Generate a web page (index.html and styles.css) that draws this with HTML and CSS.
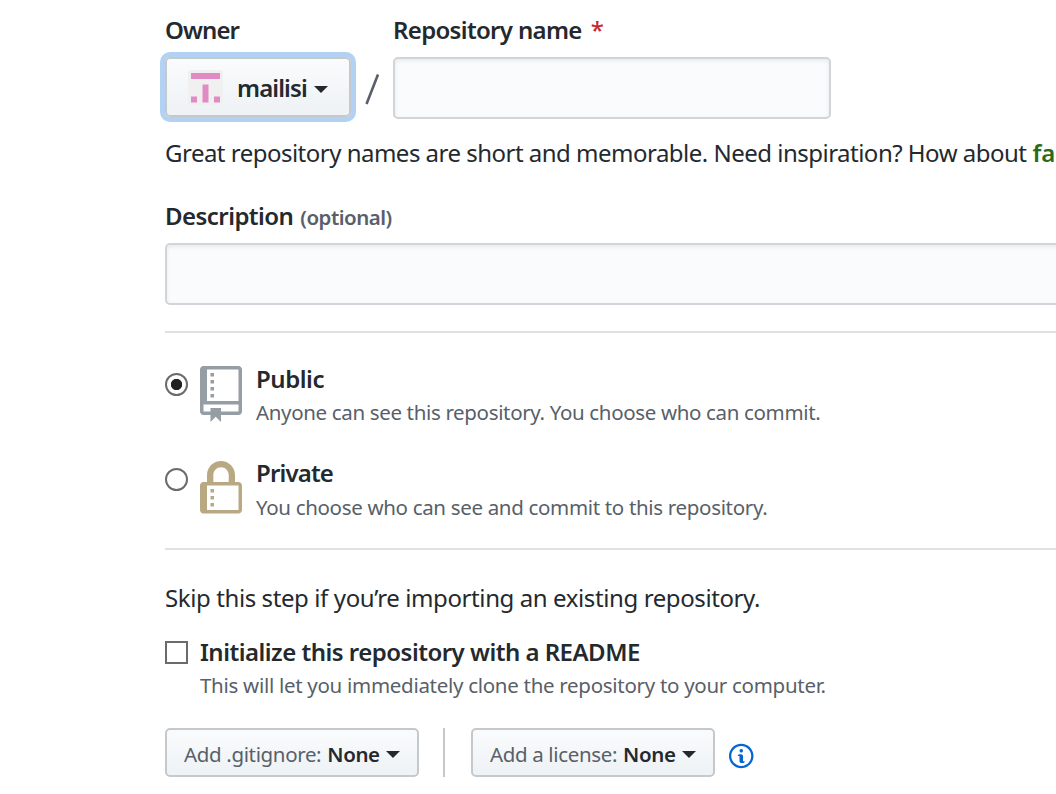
FILE: index.html
```html
<!DOCTYPE html>
<html lang="en">
<head>
<meta charset="utf-8">
<title>Create a new repository</title>
<link rel="stylesheet" href="styles.css">
</head>
<body>
<main class="page">
  <form class="form">
    <div class="name-row">
      <div class="field">
        <label class="label"><span class="t owner">Owner</span></label>
        <button type="button" class="btn owner-btn">
          <svg class="avatar" viewBox="0 0 35 35"><rect width="35" height="35" rx="3" fill="#f0f0f0"/><path fill="#e08bc3" d="M3 3h29v6H3zM14.500 14.500h6v18h-6zM3 26.500h6v6H3zM26 26.500h6v6h-6z"/></svg>
          <span class="t mailisi">mailisi</span><i class="caret"></i>
        </button>
      </div>
      <svg class="slash" viewBox="0 0 18 32"><path d="M2.500 31 14 1.500" stroke="#586069" stroke-width="2.600"/></svg>
      <div class="field">
        <label class="label"><span class="t reponame">Repository name</span><span class="star">*</span></label>
        <input class="input name-input" type="text">
      </div>
    </div>
    <p class="note"><span class="t great">Great repository names are short and memorable. Need inspiration? How about</span><strong class="suggestion">fa</strong></p>
    <label class="label desc-label"><span class="t description">Description</span><span class="t optional">(optional)</span></label>
    <input class="input desc-input" type="text">
    <hr class="rule">
    <div class="choice public">
      <span class="radio checked"></span>
      <svg class="icon" width="42" height="56" viewBox="0 0 12 16" fill="#959da5"><path fill-rule="evenodd" d="M4 9H3V8h1v1zm0-3H3v1h1V6zm0-2H3v1h1V4zm0-2H3v1h1V2zm8-1v12c0 .55-.45 1-1 1H6v2l-1.500-1.500L3 16v-2H1c-.55 0-1-.45-1-1V1c0-.55.45-1 1-1h10c.55 0 1 .45 1 1zm-1 10H1v2h2v-1h3v1h5v-2zm0-10H2v9h9V1z"/></svg>
      <div class="choice-text">
        <div class="title"><span class="t pub">Public</span></div>
        <div class="sub"><span class="t pubsub">Anyone can see this repository. You choose who can commit.</span></div>
      </div>
    </div>
    <div class="choice private">
      <span class="radio"></span>
      <svg class="icon" width="42" height="56" viewBox="0 0 12 16" fill="#b9a983"><path fill-rule="evenodd" d="M4 13H3v-1h1v1zm8-6v7c0 .55-.45 1-1 1H1c-.55 0-1-.45-1-1V7c0-.55.45-1 1-1h1V4c0-2.200 1.800-4 4-4s4 1.800 4 4v2h1c.55 0 1 .45 1 1zM3.800 6h4.410V4c0-1.220-.98-2.200-2.200-2.200-1.220 0-2.200.98-2.200 2.200v2H3.800zM11 7H2v7h9V7zM4 8H3v1h1V8zm0 2H3v1h1v-1z"/></svg>
      <div class="choice-text">
        <div class="title"><span class="t priv">Private</span></div>
        <div class="sub"><span class="t privsub">You choose who can see and commit to this repository.</span></div>
      </div>
    </div>
    <hr class="rule">
    <p class="skip"><span class="t skipt">Skip this step if you’re importing an existing repository.</span></p>
    <div class="readme">
      <span class="checkbox"></span>
      <div class="choice-text">
        <div class="title"><span class="t init">Initialize this repository with a README</span></div>
        <div class="sub"><span class="t initsub">This will let you immediately clone the repository to your computer.</span></div>
      </div>
    </div>
    <div class="actions">
      <button type="button" class="btn small gitignore"><span class="t gi">Add .gitignore:</span><b class="t none">None</b><i class="caret"></i></button>
      <span class="divider"></span>
      <button type="button" class="btn small license"><span class="t li">Add a license:</span><b class="t none">None</b><i class="caret"></i></button>
      <svg class="info" width="24.500" height="28" viewBox="0 0 14 16" fill="#0366d6"><path fill-rule="evenodd" d="M6.300 5.690a.942.942 0 0 1-.28-.7c0-.28.09-.52.28-.7.19-.18.42-.28.7-.28.28 0 .52.09.7.28.18.19.28.42.28.7 0 .28-.09.52-.28.7a1 1 0 0 1-.7.3c-.28 0-.52-.11-.7-.3zM8 7.990c-.02-.25-.11-.48-.31-.69-.2-.19-.42-.3-.69-.31H6c-.27.02-.48.13-.69.31-.2.2-.3.44-.31.69h1v3c.02.27.11.5.31.69.2.2.42.31.69.31h1c.27 0 .48-.11.69-.31.2-.19.3-.42.31-.69H8V7.980v.01zM7 2.300c-3.140 0-5.700 2.540-5.700 5.680 0 3.140 2.560 5.700 5.700 5.700s5.700-2.550 5.700-5.700c0-3.150-2.560-5.690-5.700-5.690v.01zM7 .98c3.860 0 7 3.140 7 7s-3.140 7-7 7-7-3.120-7-7 3.140-7 7-7z"/></svg>
    </div>
  </form>
</main>
</body>
</html>
```
FILE: styles.css
```css
* { box-sizing: border-box; }
html, body { margin: 0; height: 794px; overflow: hidden; }
body { background: #fff; color: #24292e; font: 24px/36px "Noto Sans", "Open Sans", sans-serif; }
.page { padding: 12px 0 0 165px; overflow: hidden; }
.form { width: 1225px; }
.t { display: inline-block; white-space: nowrap; }
.name-row { display: flex; height: 107px; }
.field { display: flex; flex-direction: column; }
.label { display: flex; align-items: baseline; height: 45px; font-weight: 600; }
.owner { letter-spacing: -.9px; }
.reponame { letter-spacing: -.67px; }
.star { color: #cb2431; margin-left: 9px; font-weight: 500; }
.btn { display: flex; align-items: center; margin: 0; padding: 0; border: 2px solid #c6c9cc; border-radius: 5px; background: linear-gradient(#fafbfc, #eff3f6 90%); color: #24292e; font: inherit; font-weight: 600; }
.btn .t { padding-top: 2px; }
.mailisi { letter-spacing: -.9px; }
.owner-btn { width: 186px; height: 60px; padding-left: 21px; box-shadow: 0 0 0 5px #b3d1f2; }
.avatar { width: 35px; height: 35px; margin-right: 14px; }
.caret { border: 7px solid transparent; border-top-color: #24292e; border-bottom: 0; margin: 5px 0 0 7px; }
.small .caret { margin: 3px 0 0 6px; }
.slash { width: 18px; height: 32px; margin: 61px 11px 0 13px; }
.input { display: block; height: 62px; margin: 0; border: 2px solid #d1d5da; border-radius: 5px; background: #fafbfc; box-shadow: inset 0 2px 4px rgba(27,31,35,.075); }
.name-input { width: 438px; }
.note { display: flex; margin: 16px 0 0; height: 36px; white-space: nowrap; }
.great { letter-spacing: -.51px; }
.suggestion { color: #2b6a17; margin-left: 6px; font-weight: 600; }
.desc-label { margin-top: 27px; }
.description { letter-spacing: -.55px; }
.optional { margin-left: 7px; color: #586069; font-size: 20.500px; letter-spacing: -.5px; }
.desc-input { width: 1225px; }
.rule { height: 2px; margin: 26px 0 0; border: 0; background: #dfe2e5; }
.choice { display: flex; align-items: flex-start; height: 94px; }
.public { margin-top: 33px; }
.private { margin-top: 1px; height: 61px; }
.radio { width: 23px; height: 23px; margin: 7px 12px 0 0; border: 2px solid #6b6b6b; border-radius: 50%; }
.checked { background: radial-gradient(circle, #202020 5.300px, #fff 6px); }
.icon { margin-right: 14px; }
.title { margin-top: -5px; height: 34px; font-weight: 600; }
.private .title { margin-top: -6px; height: 35px; }
.pub { letter-spacing: -.45px; }
.priv { letter-spacing: -.85px; }
.init { letter-spacing: -.51px; }
.sub { height: 34px; color: #586069; font-size: 20.500px; line-height: 34px; }
.pubsub { letter-spacing: -.345px; }
.privsub { letter-spacing: -.325px; }
.skip { margin: 30px 0 0; height: 36px; }
.skipt { letter-spacing: -.4px; }
.readme { display: flex; margin-top: 25px; height: 87px; }
.checkbox { width: 23px; height: 23px; margin-right: 12px; border: 2px solid #6b6b6b; }
.readme .title { margin-top: -7px; }
.initsub { letter-spacing: -.29px; }
.actions { display: flex; }
.small { height: 49px; padding-left: 17px; font-size: 20.500px; font-weight: 400; color: #586069; }
.small .none { margin-left: 6px; color: #24292e; font-weight: 600; letter-spacing: -.4px; }
.gi, .li { letter-spacing: -.35px; }
.gitignore { width: 254px; }
.license { width: 244px; }
.divider { width: 2px; height: 49px; margin: 0 26px 0 24px; background: #c6c9cc; }
.info { margin: 14px 0 0 14px; }
```
